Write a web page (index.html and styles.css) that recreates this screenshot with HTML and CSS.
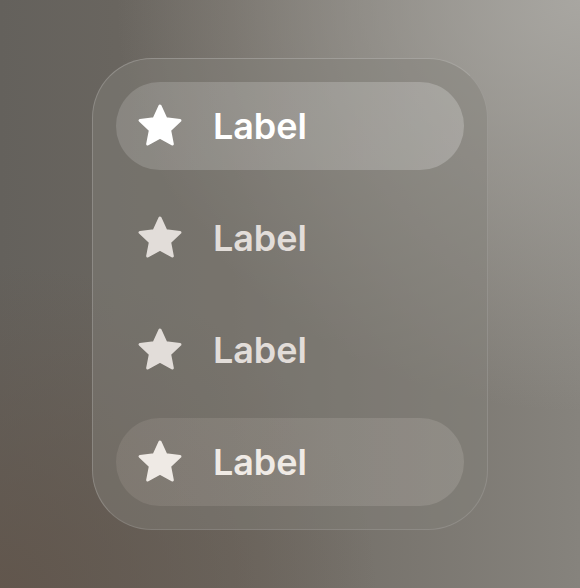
FILE: index.html
```html
<!DOCTYPE html>
<html>
<head>
<meta charset="utf-8">
<link rel="stylesheet" href="styles.css">
</head>
<body>
<main class="stage">
  <nav class="card">
    <div class="row row-active">
      <svg class="star" viewBox="0 0 48 48"><path d="M24 4 L29.94 16.83 L43.97 18.51 L33.61 28.12 L36.34 41.99 L24 35.1 L11.66 41.99 L14.39 28.12 L4.03 18.51 L18.06 16.83 Z"/></svg>
      <span class="label">Label</span>
    </div>
    <div class="row row-plain">
      <svg class="star" viewBox="0 0 48 48"><path d="M24 4 L29.94 16.83 L43.97 18.51 L33.61 28.12 L36.34 41.99 L24 35.1 L11.66 41.99 L14.39 28.12 L4.03 18.51 L18.06 16.83 Z"/></svg>
      <span class="label">Label</span>
    </div>
    <div class="row row-plain">
      <svg class="star" viewBox="0 0 48 48"><path d="M24 4 L29.94 16.83 L43.97 18.51 L33.61 28.12 L36.34 41.99 L24 35.1 L11.66 41.99 L14.39 28.12 L4.03 18.51 L18.06 16.83 Z"/></svg>
      <span class="label">Label</span>
    </div>
    <div class="row row-hover">
      <svg class="star" viewBox="0 0 48 48"><path d="M24 4 L29.94 16.83 L43.97 18.51 L33.61 28.12 L36.34 41.99 L24 35.1 L11.66 41.99 L14.39 28.12 L4.03 18.51 L18.06 16.83 Z"/></svg>
      <span class="label">Label</span>
    </div>
  </nav>
</main>
</body>
</html>
```

FILE: styles.css
```css
html, body {
  margin: 0;
  padding: 0;
}

body {
  width: 580px;
  height: 588px;
  overflow: hidden;
  font-family: Inter, "Noto Sans", sans-serif;
  background:
    radial-gradient(ellipse 80% 70% at 100% 0%, rgba(170, 168, 163, 0.95), rgba(170, 168, 163, 0) 100%),
    radial-gradient(ellipse 65% 55% at 0% 100%, rgba(97, 85, 75, 0.9), rgba(97, 85, 75, 0) 100%),
    linear-gradient(to right, #64615c 0%, #6e6962 40%, #86837d 100%);
}

.stage {
  width: 580px;
  height: 588px;
  display: flex;
  align-items: center;
  justify-content: center;
}

.card {
  box-sizing: border-box;
  width: 396px;
  padding: 23px;
  border-radius: 60px;
  border: 1px solid rgba(255, 255, 255, 0.12);
  border-top-color: rgba(255, 255, 255, 0.2);
  border-left-color: rgba(255, 255, 255, 0.18);
  background: rgba(131, 128, 123, 0.45);
  display: flex;
  flex-direction: column;
  gap: 24px;
}

.row {
  height: 88px;
  border-radius: 44px;
  display: flex;
  align-items: center;
  padding-left: 20px;
  gap: 29px;
}

.row-active {
  background: linear-gradient(to right, rgba(255, 255, 255, 0.15), rgba(255, 255, 255, 0.22));
  color: #ffffff;
}

.row-plain {
  color: #e2ddd9;
}

.row-hover {
  background: linear-gradient(to right, rgba(255, 240, 230, 0.09), rgba(255, 245, 240, 0.13));
  color: #efeae5;
}

.star {
  width: 48px;
  height: 48px;
  flex: none;
}

.star path {
  fill: currentColor;
  stroke: currentColor;
  stroke-width: 3;
  stroke-linejoin: round;
}

.label {
  font-size: 36px;
  font-weight: 600;
  letter-spacing: -0.1px;
  line-height: 1;
}
```
